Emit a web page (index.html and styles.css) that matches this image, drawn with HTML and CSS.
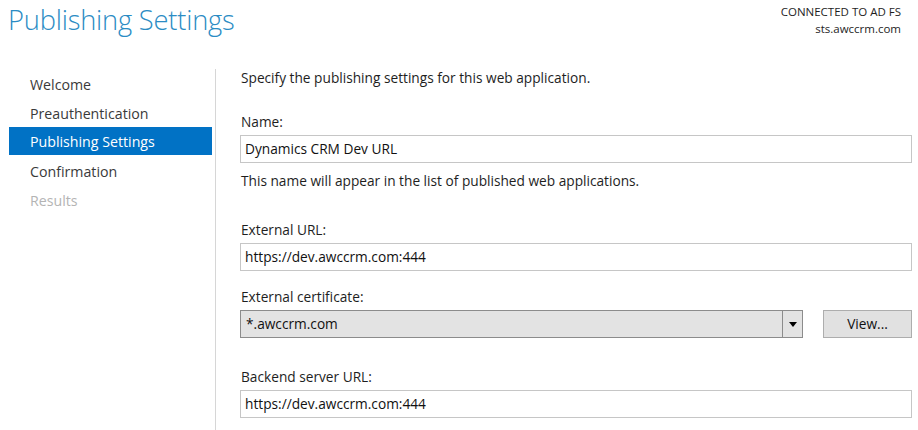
FILE: index.html
```html
<!DOCTYPE html>
<html>
<head>
<meta charset="utf-8">
<link rel="stylesheet" href="styles.css">
</head>
<body>
<header class="header">
  <h1 class="title">Publishing Settings</h1>
  <div class="conn">
    <div class="conn-label">CONNECTED TO AD FS</div>
    <div class="conn-host">sts.awccrm.com</div>
  </div>
</header>
<main class="main">
  <nav class="nav">
    <div class="nav-item">Welcome</div>
    <div class="nav-item">Preauthentication</div>
    <div class="nav-item active">Publishing Settings</div>
    <div class="nav-item">Confirmation</div>
    <div class="nav-item disabled">Results</div>
  </nav>
  <section class="content">
    <p class="intro">Specify the publishing settings for this web application.</p>
    <label class="label l-name">Name:</label>
    <div class="input">Dynamics CRM Dev URL</div>
    <p class="help">This name will appear in the list of published web applications.</p>
    <label class="label l-ext">External URL:</label>
    <div class="input">https://dev.awccrm.com:444</div>
    <label class="label l-cert">External certificate:</label>
    <div class="cert-row">
      <div class="select">
        <span class="select-value">*.awccrm.com</span>
        <span class="select-arrow"><svg width="8" height="5" viewBox="0 0 8 5"><path d="M0 0H8L4 5Z" fill="#000"/></svg></span>
      </div>
      <div class="button">View...</div>
    </div>
    <label class="label l-back">Backend server URL:</label>
    <div class="input">https://dev.awccrm.com:444</div>
  </section>
</main>
</body>
</html>
```
FILE: styles.css
```css
* { box-sizing: border-box; }
html, body { margin: 0; padding: 0; background: #fff; }
body {
  font-family: "Open Sans", "Noto Sans", sans-serif;
  font-size: 13.7px;
  color: #1e1e1e;
  width: 918px;
  height: 430px;
  overflow: hidden;
}
.header {
  height: 60px;
  display: flex;
  justify-content: space-between;
  align-items: flex-start;
}
.title {
  margin: 0;
  padding-left: 8px;
  font-size: 27.3px;
  font-weight: 300;
  line-height: 40px;
  color: #2b8cc4;
  letter-spacing: -0.2px;
}
.conn {
  text-align: right;
  padding: 3px 17px 0 0;
  font-size: 11.5px;
  line-height: 17px;
  color: #1e1e1e;
}
.main {
  display: flex;
  height: 370px;
}
.nav {
  width: 216px;
  margin-top: 9px;
  padding-left: 9px;
  padding-right: 3px;
  border-right: 1px solid #d6d6d6;
}
.nav-item {
  height: 29px;
  line-height: 31px;
  padding-left: 21px;
  font-size: 14.2px;
  color: #3a3a3a;
}
.nav-item.active {
  background: #0172c5;
  color: #fff;
  height: 28px;
  margin-bottom: 1px;
  line-height: 29px;
}
.nav-item.disabled { color: #b4b4b4; }
.content {
  flex: 1;
  padding: 7px 6px 0 24px;
}
.intro, .help, .label {
  display: block;
  margin: 0;
  height: 20px;
  line-height: 21px;
  padding-left: 1px;
}
.l-name { margin-top: 24px; }
.help { margin-top: 7px; }
.l-ext { margin-top: 29px; }
.l-cert { margin-top: 15px; }
.l-back { margin-top: 28px; }
.input {
  margin-top: 4px;
  height: 28px;
  line-height: 26px;
  border: 1px solid #c6c6c6;
  padding-left: 4px;
  color: #111;
  background: #fff;
}
.cert-row {
  margin-top: 4px;
  display: flex;
  gap: 20px;
}
.select {
  width: 563px;
  height: 28px;
  display: flex;
  border: 1px solid #8c8c8c;
  background: #e3e3e3;
}
.select-value {
  flex: 1;
  line-height: 26px;
  padding-left: 5px;
  color: #111;
}
.select-arrow {
  width: 20px;
  border-left: 1px solid #8c8c8c;
  display: flex;
  align-items: center;
  justify-content: center;
}
.button {
  width: 89px;
  height: 28px;
  line-height: 26px;
  text-align: center;
  border: 1px solid #adadad;
  background: #e1e1e1;
  color: #111;
}
```
